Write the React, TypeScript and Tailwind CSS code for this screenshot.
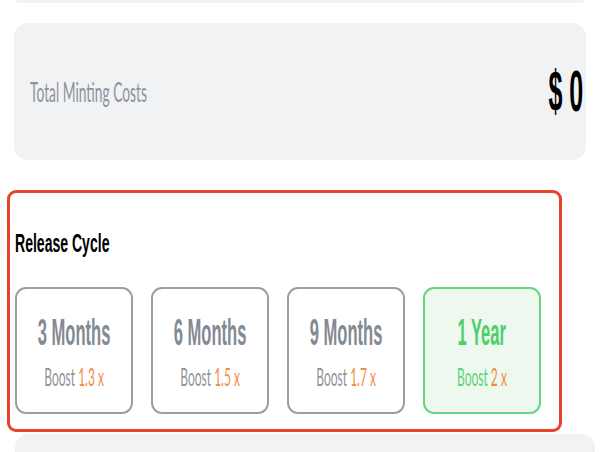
import * as React from "react";

const cycles = [
  { label: "3 Months", boost: "1.3" },
  { label: "6 Months", boost: "1.5" },
  { label: "9 Months", boost: "1.7" },
  { label: "1 Year", boost: "2" },
];

export default function App() {
  const [selected, setSelected] = React.useState("1 Year");

  return (
    <div className="w-[600px] h-[452px] overflow-hidden bg-white flex flex-col">
      <div className="mx-[15px] w-[570px] h-[3px] shrink-0 rounded-b-xl bg-[#f1f2f4]" />

      <div className="mt-[20px] ml-[14px] w-[572px] h-[137px] shrink-0 rounded-[14px] bg-[#f1f2f4] flex items-center justify-between pl-[16px] pr-[3px]">
        <span className="inline-block origin-left scale-x-[0.53] whitespace-nowrap font-['Lato',sans-serif] text-[26px] leading-[30px] text-[#8d939c]">
          Total Minting Costs
        </span>
        <span className="inline-block origin-right scale-x-[0.44] whitespace-nowrap font-['Liberation_Sans',Arial,sans-serif] font-bold text-[57px] leading-none text-black">
          $ 0
        </span>
      </div>

      <div className="mt-[30px] ml-[7px] w-[555px] h-[242px] shrink-0 rounded-[9px] border-[3px] border-[#e8432a] flex flex-col pl-[5px] pt-[35px]">
        <span className="inline-block origin-left scale-x-[0.54] whitespace-nowrap font-['Liberation_Sans',Arial,sans-serif] font-bold text-[26px] leading-[30px] text-black">
          Release Cycle
        </span>
        <div className="mt-[29px] flex gap-[18px]">
          {cycles.map((c) => {
            const active = c.label === selected;
            return (
              <button
                key={c.label}
                onClick={() => setSelected(c.label)}
                className={
                  "w-[118px] h-[127px] rounded-[11px] border-2 flex flex-col items-center justify-center " +
                  (active ? "border-[#66d57f] bg-[#edf9ef]" : "border-[#9aa0a9] bg-white")
                }
              >
                <span
                  className={
                    "mt-[2px] inline-block scale-x-[0.46] whitespace-nowrap font-['Liberation_Sans',Arial,sans-serif] font-bold text-[36px] leading-[40px] " +
                    (active ? "text-[#4ecf6c]" : "text-[#838a94]")
                  }
                >
                  {c.label}
                </span>
                <span
                  className={
                    "mt-[8px] inline-block scale-x-[0.48] whitespace-nowrap font-['Lato',sans-serif] text-[25px] leading-[30px] " +
                    (active ? "text-[#5fd27a]" : "text-[#8f949c]")
                  }
                >
                  Boost <span className="text-[#f28d44]">{c.boost} x</span>
                </span>
              </button>
            );
          })}
        </div>
      </div>

      <div className="mt-[2px] ml-[15px] w-[580px] h-[40px] shrink-0 rounded-t-[14px] bg-[#f1f2f4]" />
    </div>
  );
}
